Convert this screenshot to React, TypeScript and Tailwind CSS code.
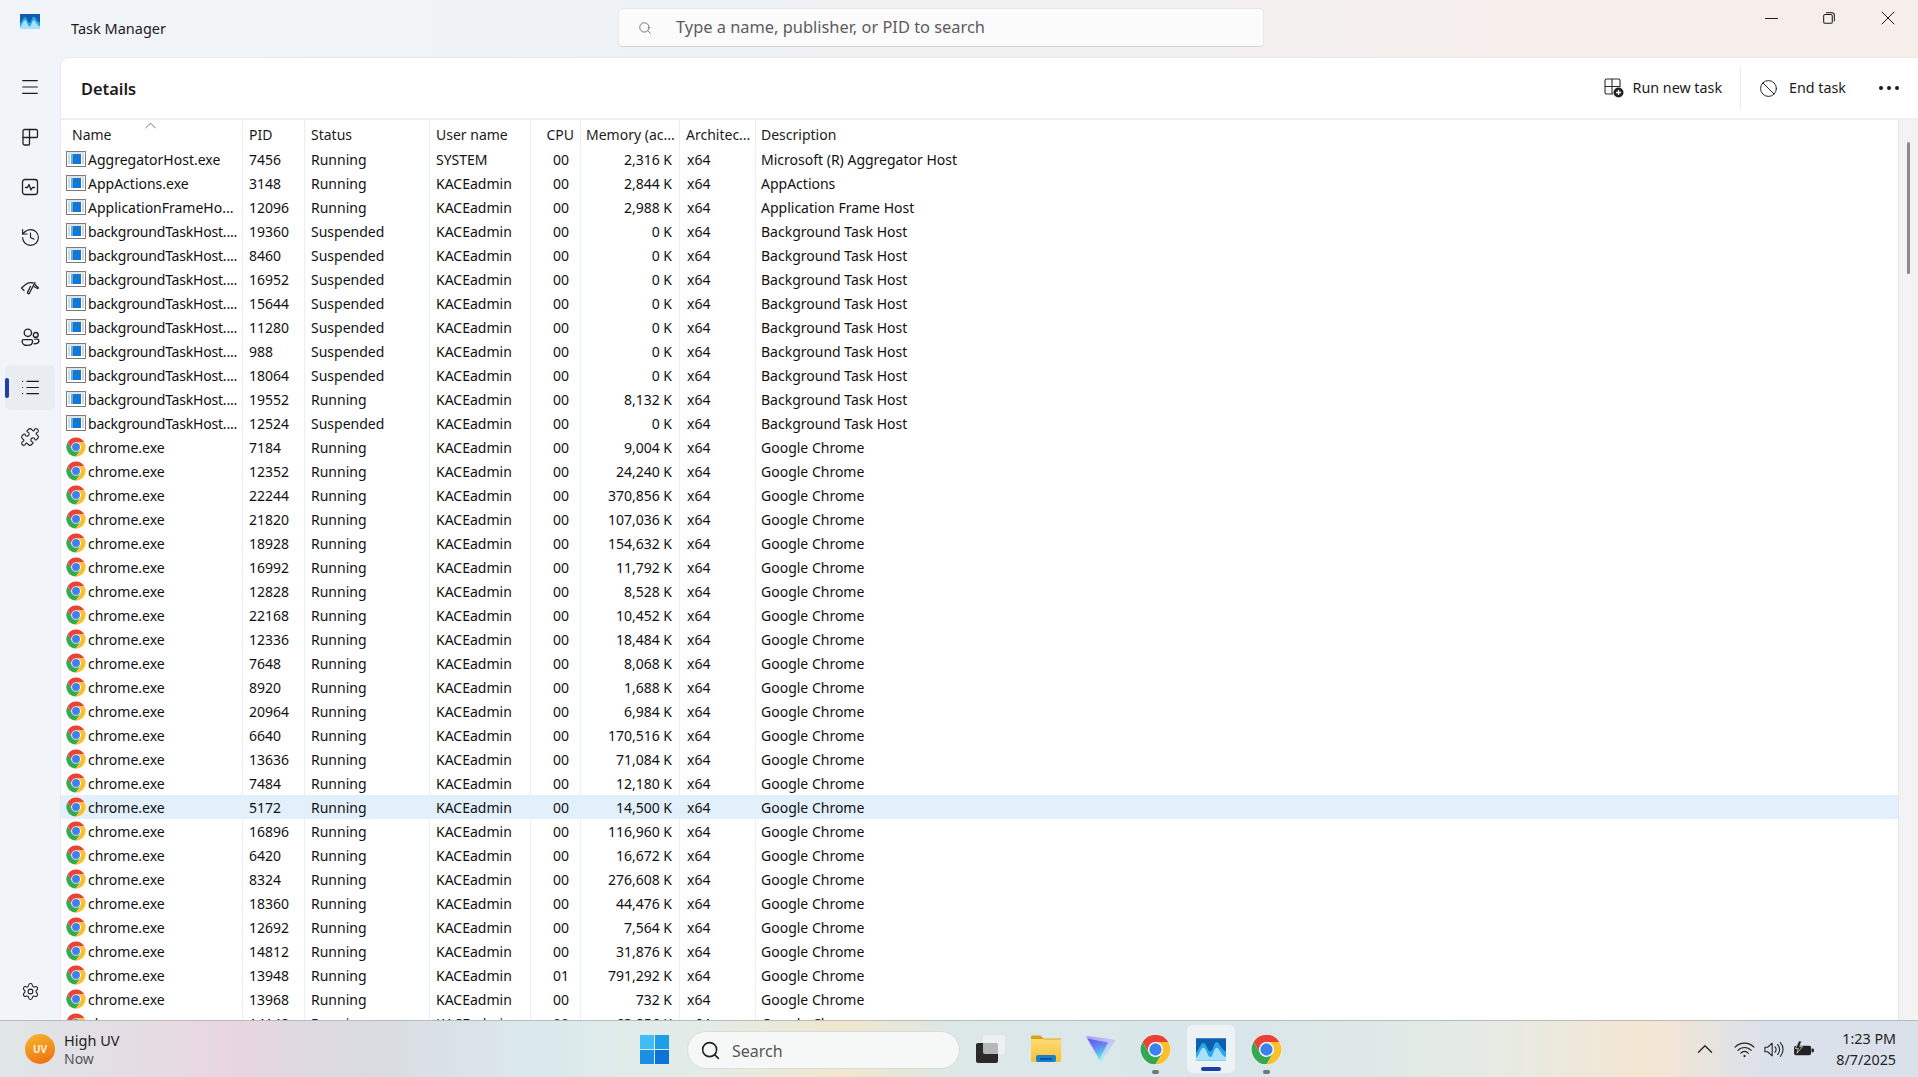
import { ChevronUp, History, List, Menu, Puzzle, Search, Settings, Ban, Minus, X } from "lucide-react"

type Proc = [string, string, string, string, string, string, string]

const bg = "backgroundTaskHost...."
const bgDesc = "Background Task Host"

const head: Proc[] = [
  ["AggregatorHost.exe", "7456", "Running", "SYSTEM", "00", "2,316 K", "Microsoft (R) Aggregator Host"],
  ["AppActions.exe", "3148", "Running", "KACEadmin", "00", "2,844 K", "AppActions"],
  ["ApplicationFrameHo...", "12096", "Running", "KACEadmin", "00", "2,988 K", "Application Frame Host"],
  [bg, "19360", "Suspended", "KACEadmin", "00", "0 K", bgDesc],
  [bg, "8460", "Suspended", "KACEadmin", "00", "0 K", bgDesc],
  [bg, "16952", "Suspended", "KACEadmin", "00", "0 K", bgDesc],
  [bg, "15644", "Suspended", "KACEadmin", "00", "0 K", bgDesc],
  [bg, "11280", "Suspended", "KACEadmin", "00", "0 K", bgDesc],
  [bg, "988", "Suspended", "KACEadmin", "00", "0 K", bgDesc],
  [bg, "18064", "Suspended", "KACEadmin", "00", "0 K", bgDesc],
  [bg, "19552", "Running", "KACEadmin", "00", "8,132 K", bgDesc],
  [bg, "12524", "Suspended", "KACEadmin", "00", "0 K", bgDesc],
]

const chrome: [string, string, string][] = [
  ["7184", "00", "9,004 K"],
  ["12352", "00", "24,240 K"],
  ["22244", "00", "370,856 K"],
  ["21820", "00", "107,036 K"],
  ["18928", "00", "154,632 K"],
  ["16992", "00", "11,792 K"],
  ["12828", "00", "8,528 K"],
  ["22168", "00", "10,452 K"],
  ["12336", "00", "18,484 K"],
  ["7648", "00", "8,068 K"],
  ["8920", "00", "1,688 K"],
  ["20964", "00", "6,984 K"],
  ["6640", "00", "170,516 K"],
  ["13636", "00", "71,084 K"],
  ["7484", "00", "12,180 K"],
  ["5172", "00", "14,500 K"],
  ["16896", "00", "116,960 K"],
  ["6420", "00", "16,672 K"],
  ["8324", "00", "276,608 K"],
  ["18360", "00", "44,476 K"],
  ["12692", "00", "7,564 K"],
  ["14812", "00", "31,876 K"],
  ["13948", "01", "791,292 K"],
  ["13968", "00", "732 K"],
  ["14148", "00", "63,856 K"],
]

const rows: Proc[] = [
  ...head,
  ...chrome.map(([pid, cpu, mem]): Proc => ["chrome.exe", pid, "Running", "KACEadmin", cpu, mem, "Google Chrome"]),
]

function ChromeIcon({ className = "w-5 h-5" }: { className?: string }) {
  const blade = "M4.08 12.5A23 23 0 0 1 43.92 12.5H24A11.5 11.5 0 0 0 14.04 29.75Z"
  return (
    <svg viewBox="0 0 48 48" className={className}>
      <circle cx="24" cy="24" r="23.500" fill="#fff" />
      <path d={blade} fill="#ea4335" />
      <path d={blade} fill="#fbc02d" transform="rotate(120 24 24)" />
      <path d={blade} fill="#34a853" transform="rotate(240 24 24)" />
      <circle cx="24" cy="24" r="9.5" fill="#3b82f0" />
    </svg>
  )
}

function ExeIcon() {
  return (
    <svg viewBox="0 0 20 16" className="w-5 h-4">
      <rect x="0.5" y="0.5" width="19" height="15" fill="#fff" stroke="#7b7b7b" />
      <path d="M2 2h16" stroke="#c4c4c4" />
      <path d="M2 4h2M2 6h2M2 8h2M2 10h2M2 12h2M16 4h2M16 6h2M16 8h2M16 10h2M16 12h2" stroke="#9a9a9a" strokeWidth="0.8" />
      <rect x="5" y="3" width="10" height="10" fill="#1477d4" />
      <rect x="5" y="3" width="2" height="10" fill="#5ab0ee" />
    </svg>
  )
}

function TmLogo({ className }: { className: string }) {
  return (
    <svg viewBox="0 0 32 24" className={className}>
      <rect width="32" height="24" fill="#0f5fb0" />
      <path d="M0 15C3 13 5 5 8 5s4 8 7 9 4-10 7-10 5 9 10 10V24H0z" fill="#2aa6ea" />
      <path d="M0 21C3 19 5 10 8 10s4 9 7 10 4-10 7-10 5 9 10 10V24H0z" fill="#a9e0fa" />
    </svg>
  )
}

function Cell({ className, children }: { className: string; children: React.ReactNode }) {
  return <div className={`shrink-0 h-full flex items-center whitespace-nowrap overflow-hidden border-r border-[#e6effa] ${className}`}>{children}</div>
}

function Row({ row, selected }: { row: Proc; selected: boolean }) {
  const isChrome = row[0] === "chrome.exe"
  return (
    <div className={`flex h-6 shrink-0 text-[#111] ${selected ? "bg-[#e2f0fb]" : ""}`}>
      <Cell className="w-[182px] pl-[5px]">
        {isChrome ? <ChromeIcon /> : <ExeIcon />}
        <span className={`ml-[2px] ${row[0] === bg ? "tracking-[-0.2px]" : ""}`}>{row[0]}</span>
      </Cell>
      <Cell className="w-[62px] pl-[6px]">{row[1]}</Cell>
      <Cell className="w-[125px] pl-[6px]">{row[2]}</Cell>
      <Cell className="w-[101px] pl-[6px]">{row[3]}</Cell>
      <Cell className="w-[50px] pr-[11px] justify-end">{row[4]}</Cell>
      <Cell className="w-[99px] pr-[7px] justify-end">{row[5]}</Cell>
      <Cell className="w-[76px] pl-[7px]">x64</Cell>
      <div className="flex-1 h-full flex items-center pl-[5px]">{row[6]}</div>
    </div>
  )
}

function NavIcon({ active, children }: { active?: boolean; children: React.ReactNode }) {
  return (
    <div className="h-[50px] w-full flex items-center justify-center">
      <div className={`relative w-[50px] h-[45px] rounded-md flex items-center justify-center ${active ? "bg-[#e9ecf1]" : ""}`}>
        {active && <div className="absolute left-0 top-[13px] w-1 h-5 rounded-full bg-[#1d3fae]" />}
        {children}
      </div>
    </div>
  )
}

const navStroke = { fill: "none", stroke: "#222", strokeWidth: 1.3, strokeLinecap: "round", strokeLinejoin: "round" } as const

export default function App() {
  return (
    <div className="h-screen w-full flex flex-col overflow-hidden font-['Noto_Sans',sans-serif] text-[14px] text-[#1b1b1b]">
      <div className="flex-1 min-h-0 flex flex-col bg-[linear-gradient(90deg,#f1f5f9_0%,#eff2f4_40%,#f1f0f0_60%,#f6eeeb_80%,#f6eeeb_100%)]">
        {/* title bar */}
        <div className="h-[57px] shrink-0 flex items-start">
          <div className="w-[71px] pl-5 pt-[14px] shrink-0">
            <TmLogo className="w-5 h-[15px]" />
          </div>
          <div className="w-[547px] shrink-0 pt-[18px] text-[14.5px] leading-5">Task Manager</div>
          <div className="w-[646px] h-[39px] mt-2 shrink-0 flex items-center rounded-[5px] border border-[#e7e7e7] border-b-[#d4d4d4] bg-[#fbfbfb]">
            <Search className="w-[14px] h-[14px] ml-[19px] text-[#666]" strokeWidth={1.5} />
            <span className="ml-[24px] mb-[1px] text-[16.4px] text-[#5c5c5c]">Type a name, publisher, or PID to search</span>
          </div>
          <div className="ml-auto flex items-center pt-[6px] pr-[18px] gap-[41px] text-[#1b1b1b]">
            <Minus className="w-[21px] h-[21px]" strokeWidth={1.1} />
            <svg viewBox="0 0 14 14" className="w-[12px] h-[12px]" fill="none" stroke="#1b1b1b" strokeWidth="1.200">
              <rect x="0.8" y="3" width="10" height="10.2" rx="1.6" />
              <path d="M3.4 1h7.4a2.4 2.4 0 0 1 2.4 2.4v7.4" />
            </svg>
            <X className="w-6 h-6" strokeWidth={1} />
          </div>
        </div>

        <div className="flex-1 min-h-0 flex">
          {/* nav rail */}
          <div className="w-[60px] shrink-0 flex flex-col items-center pt-[5px] pb-[4px]">
            <NavIcon><Menu className="w-[22px] h-[22px]" strokeWidth={1.2} /></NavIcon>
            <NavIcon>
              <svg viewBox="0 0 20 20" className="w-5 h-5" {...navStroke}>
                <path d="M3 4a1.5 1.5 0 0 1 1.5-1.5H16A1.5 1.5 0 0 1 17.5 4v5.5a1 1 0 0 1-1 1H9.5V17a1 1 0 0 1-1 1H4.5A1.5 1.5 0 0 1 3 16.5z" />
                <path d="M9.5 2.5v8M3 10.5h6.5" />
              </svg>
            </NavIcon>
            <NavIcon>
              <svg viewBox="0 0 20 20" className="w-5 h-5" {...navStroke}>
                <rect x="2.5" y="2.5" width="15" height="15" rx="2.5" />
                <path d="M5.5 10.5h2l1.5-3 2 5.5 1.5-2.5h2" />
              </svg>
            </NavIcon>
            <NavIcon><History className="w-[21px] h-[21px]" strokeWidth={1.3} /></NavIcon>
            <NavIcon>
              <svg viewBox="0 0 20 20" className="w-5 h-5" {...navStroke}>
                <path d="M1.5 11 5 8M1.5 11l2.5 2.5M18.5 11 15 7.5M5.5 7.5C8 5.6 10.500 5.300 13 6" />
                <path d="M15 5.500 9.500 16a1 1 0 0 1-2-.6L10.500 9.500" />
                <path d="M14 9.500l3.500 2" />
              </svg>
            </NavIcon>
            <NavIcon>
              <svg viewBox="0 0 20 20" className="w-[21px] h-[21px]" {...navStroke}>
                <circle cx="7.500" cy="5.500" r="3.500" />
                <circle cx="15" cy="7.500" r="2.300" />
                <path d="M2 13.500a1.500 1.500 0 0 1 1.500-1.500h7a1.500 1.500 0 0 1 1.500 1.500c0 2.700-2.200 4-5 4s-5-1.300-5-4z" />
                <path d="M14 11.500h2.500a1.500 1.500 0 0 1 1.500 1.500c0 2-1.800 3-4.500 3" />
              </svg>
            </NavIcon>
            <NavIcon active><List className="w-[21px] h-[21px]" strokeWidth={1.4} /></NavIcon>
            <NavIcon><Puzzle className="w-[20px] h-[20px]" strokeWidth={1.3} /></NavIcon>
            <div className="mt-auto w-full">
              <NavIcon><Settings className="w-[19px] h-[19px]" strokeWidth={1.3} /></NavIcon>
            </div>
          </div>

          {/* main panel */}
          <div className="flex-1 min-w-0 flex flex-col bg-white rounded-tl-lg border-t border-l border-[#e9e9e9]">
            <div className="h-[62px] shrink-0 flex items-center border-b-2 border-[#f0eeee] pl-5">
              <div className="mt-[3px] text-[16.4px] font-semibold">Details</div>
              <div className="ml-auto flex items-center h-10">
                <svg viewBox="0 0 20 20" className="w-5 h-5" fill="none" stroke="#2b2b2b" strokeWidth="1.1">
                  <path d="M9 16H2.500a1.500 1.500 0 0 1-1.500-1.500V2.500A1.500 1.500 0 0 1 2.500 1h12A1.500 1.500 0 0 1 16 2.500V9" />
                  <path d="M1 8.500h15M8 1v15" />
                  <circle cx="14.500" cy="14.500" r="5" fill="#222" stroke="none" />
                  <path d="M14.500 12v5M12 14.500h5" stroke="#fff" strokeWidth="1.300" />
                </svg>
                <span className="ml-[9px] text-[14.300px]">Run new task</span>
                <div className="w-px h-10 bg-[#e9e9e9] ml-[18px]" />
                <Ban className="w-[19px] h-[19px] ml-[18px]" strokeWidth={1.200} />
                <span className="ml-[11px] text-[14.300px]">End task</span>
                <div className="flex gap-[4px] ml-[33px] mr-[19px]">
                  <div className="w-[4px] h-[4px] rounded-full bg-[#1b1b1b]" />
                  <div className="w-[4px] h-[4px] rounded-full bg-[#1b1b1b]" />
                  <div className="w-[4px] h-[4px] rounded-full bg-[#1b1b1b]" />
                </div>
              </div>
            </div>

            <div className="flex-1 min-h-0 flex">
              <div className="flex-1 min-w-0 flex flex-col overflow-hidden">
                {/* column headers */}
                <div className="relative h-[27px] shrink-0 flex text-[#1b1b1b]">
                  <ChevronUp className="absolute left-[80px] top-[-4px] w-[19px] h-[19px] text-[#555]" strokeWidth={1} />
                  <div className="w-[182px] shrink-0 pl-[11px] pt-[4px] border-r border-[#ededed]">Name</div>
                  <div className="w-[62px] shrink-0 pl-[6px] pt-[4px] border-r border-[#ededed]">PID</div>
                  <div className="w-[125px] shrink-0 pl-[6px] pt-[4px] border-r border-[#ededed]">Status</div>
                  <div className="w-[101px] shrink-0 pl-[6px] pt-[4px] border-r border-[#ededed]">User name</div>
                  <div className="w-[50px] shrink-0 pr-[6px] pt-[4px] text-right border-r border-[#ededed]">CPU</div>
                  <div className="w-[99px] shrink-0 pl-[5px] pt-[4px] border-r border-[#ededed] whitespace-nowrap">Memory (ac...</div>
                  <div className="w-[76px] shrink-0 pl-[6px] pt-[4px] border-r border-[#ededed] whitespace-nowrap">Architec...</div>
                  <div className="flex-1 pl-[5px] pt-[4px]">Description</div>
                </div>
                {rows.map((r, i) => (
                  <Row key={r[1] + i} row={r} selected={r[1] === "5172"} />
                ))}
              </div>
              <div className="w-5 shrink-0 bg-[#f3f3f3] border-l border-[#e6e6e6] pt-[22px] flex justify-center">
                <div className="w-[3px] h-[132px] rounded-full bg-[#8a8a8a]" />
              </div>
            </div>
          </div>
        </div>
      </div>

      {/* taskbar */}
      <div className="h-[57px] shrink-0 flex items-center border-t border-[#b9bcbf] bg-[linear-gradient(90deg,#dfe6e6_0%,#e8d6e2_12%,#d9dbe0_19%,#dbe9ed_28%,#e4ece6_37%,#f0e7cc_44%,#dce8e8_50%,#d9e6ea_65%,#e6ebe4_78%,#f5e6d2_86%,#dbe1ea_92%,#dbe1eb_100%)]">
        <div className="w-[640px] shrink-0 flex items-center pl-[25px]">
          <div className="w-[30px] h-[30px] rounded-full bg-[linear-gradient(160deg,#f5b82e,#ef6c10)] flex items-center justify-center text-[10px] font-bold text-[#fff3d6]">UV</div>
          <div className="ml-[9px] flex flex-col">
            <span className="text-[14.500px] leading-[20px] text-[#222]">High UV</span>
            <span className="text-[14px] leading-[18px] text-[#555]">Now</span>
          </div>
        </div>
        <svg viewBox="0 0 29 29" className="w-[29px] h-[29px] shrink-0">
          <rect width="14" height="14" fill="#40bdf4" />
          <rect x="15" width="14" height="14" fill="#1f9ee8" />
          <rect y="15" width="14" height="14" fill="#1a90e4" />
          <rect x="15" y="15" width="14" height="14" fill="#0b74d6" />
        </svg>
        <div className="ml-[18px] mt-[2px] w-[273px] h-[38px] shrink-0 rounded-full border border-[#d9dcda] bg-[#f5f8f6] flex items-center">
          <Search className="w-[21px] h-[21px] ml-[12px] text-[#222]" strokeWidth={1.800} />
          <span className="ml-[11px] mt-[2px] text-[16px] text-[#555]">Search</span>
        </div>
        <div className="ml-4 relative w-[29px] h-[28px] shrink-0">
          <div className="absolute left-0 bottom-0 w-[22px] h-[20px] rounded-[2px] bg-[#2a2a2a]" />
          <div className="absolute right-0 top-0 w-[22px] h-[19px] rounded-[2px] bg-[#f4f4f4]/70" />
        </div>
        <svg viewBox="0 0 30 28" className="ml-[26px] w-[30px] h-[28px] shrink-0">
          <defs>
            <linearGradient id="folder" x1="0" y1="0" x2="0" y2="1">
              <stop offset="0" stopColor="#fddb72" />
              <stop offset="1" stopColor="#f8c13a" />
            </linearGradient>
          </defs>
          <path d="M0 2a1.500 1.500 0 0 1 1.500-1.500h8L13 4H0z" fill="#d9a012" />
          <rect y="4" width="30" height="23" rx="1" fill="url(#folder)" />
          <path d="M13 4h17" stroke="#e0a81c" strokeWidth="1" />
          <rect x="5" y="20" width="20" height="7" rx="2" fill="#1a7fcf" />
          <path d="M9 24h12" stroke="#083c70" strokeWidth="1.200" />
        </svg>
        <svg viewBox="0 0 31 30" className="ml-[24px] w-[31px] h-[30px] shrink-0">
          <defs>
            <linearGradient id="vpnOuter" x1="0" y1="0" x2="0.5" y2="1">
              <stop offset="0" stopColor="#a99cf6" />
              <stop offset="0.55" stopColor="#c9c6f8" />
              <stop offset="1" stopColor="#a6f0ec" />
            </linearGradient>
            <linearGradient id="vpnInner" x1="0" y1="0" x2="0.4" y2="1">
              <stop offset="0" stopColor="#6a4ff5" />
              <stop offset="0.55" stopColor="#5f8cf0" />
              <stop offset="1" stopColor="#5fe0e4" />
            </linearGradient>
          </defs>
          <path d="M1.500 3.500Q1 2 3 2L28 5.500Q31 6 29.500 8L17 26Q15 28.500 13.500 26Z" fill="url(#vpnOuter)" />
          <path d="M2.500 4.500 23 8.500 14.500 25Z" fill="url(#vpnInner)" />
        </svg>
        <div className="ml-[24px] shrink-0 relative w-[31px] h-[31px]">
          <ChromeIcon className="w-[31px] h-[31px]" />
          <div className="absolute left-[12px] top-[36px] w-[7px] h-[4px] rounded-full bg-[#70777a]" />
        </div>
        <div className="ml-4 shrink-0 relative w-12 h-[48px] rounded-md bg-[#edf3f5] flex items-center justify-center">
          <TmLogo className="w-[30px] h-[23px]" />
          <div className="absolute left-[14px] bottom-[2px] w-[20px] h-[4px] rounded-full bg-[#1d3fae]" />
        </div>
        <div className="ml-4 shrink-0 relative w-[31px] h-[31px]">
          <ChromeIcon className="w-[31px] h-[31px]" />
          <div className="absolute left-[12px] top-[36px] w-[7px] h-[4px] rounded-full bg-[#70777a]" />
        </div>

        <div className="ml-auto flex items-center pr-[22px]">
          <ChevronUp className="w-[26px] h-[26px] text-[#222]" strokeWidth={1.2} />
          <svg viewBox="0 0 22 18" className="ml-[16px] w-[21px] h-[17px]" fill="none" stroke="#222" strokeWidth="1.200" strokeLinecap="round">
            <path d="M1 6.500a14 14 0 0 1 20 0M4 10a9.500 9.500 0 0 1 14 0M7 13a5 5 0 0 1 8 0" />
            <circle cx="11" cy="16" r="1.200" fill="#222" stroke="none" />
          </svg>
          <svg viewBox="0 0 22 18" className="ml-[9px] w-[20px] h-[17px]" fill="none" stroke="#222" strokeWidth="1.200" strokeLinecap="round" strokeLinejoin="round">
            <path d="M1 6.500h3l5-4.500v14l-5-4.500H1z" />
            <path d="M12 6a4 4 0 0 1 0 6M15 3.500a8 8 0 0 1 0 11M18 1.500a11 11 0 0 1 0 15" />
          </svg>
          <svg viewBox="0 0 22 18" className="ml-[9px] w-[21px] h-[17px]">
            <path d="M3 5h14a2 2 0 0 1 2 2v6a2 2 0 0 1-2 2H3a2 2 0 0 1-2-2V7a2 2 0 0 1 2-2z" fill="#222" />
            <rect x="19.500" y="8" width="2.500" height="4" rx="1" fill="#222" />
            <path d="M6 0 2.500 8H5.500L4 13 10 6H7L9 0z" fill="#222" stroke="#dbe1ea" strokeWidth="0.800" />
          </svg>
          <div className="ml-[22px] flex flex-col items-end text-[14.300px] leading-[21px] text-[#222]">
            <span>1:23 PM</span>
            <span>8/7/2025</span>
          </div>
        </div>
      </div>
    </div>
  )
}
